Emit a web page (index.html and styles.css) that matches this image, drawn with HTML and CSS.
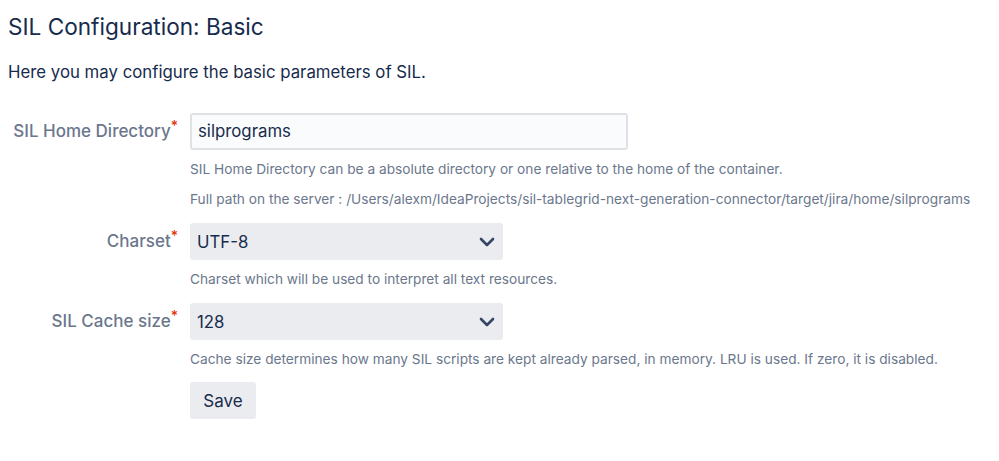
FILE: index.html
```html
<!DOCTYPE html>
<html>
<head>
<meta charset="utf-8">
<link rel="stylesheet" href="styles.css">
</head>
<body>
<div class="page">
  <h1 class="title">SIL Configuration: Basic</h1>
  <p class="intro">Here you may configure the basic parameters of SIL.</p>
  <form class="form">
    <div class="row">
      <label class="label">SIL Home Directory<span class="req">*</span></label>
      <div class="field">
        <div class="input">silprograms</div>
        <div class="desc first">SIL Home Directory can be a absolute directory or one relative to the home of the container.</div>
        <div class="desc">Full path on the server : /Users/alexm/IdeaProjects/sil-tablegrid-next-generation-connector/target/jira/home/silprograms</div>
      </div>
    </div>
    <div class="row">
      <label class="label">Charset<span class="req">*</span></label>
      <div class="field">
        <div class="select"><span>UTF-8</span>
          <svg class="chev" width="16" height="16" viewBox="0 0 16 16"><path d="M2 5 L8 11 L14 5" fill="none" stroke="#344563" stroke-width="2.6" stroke-linecap="round" stroke-linejoin="round"/></svg>
        </div>
        <div class="desc first">Charset which will be used to interpret all text resources.</div>
      </div>
    </div>
    <div class="row">
      <label class="label">SIL Cache size<span class="req">*</span></label>
      <div class="field">
        <div class="select"><span>128</span>
          <svg class="chev" width="16" height="16" viewBox="0 0 16 16"><path d="M2 5 L8 11 L14 5" fill="none" stroke="#344563" stroke-width="2.6" stroke-linecap="round" stroke-linejoin="round"/></svg>
        </div>
        <div class="desc first">Cache size determines how many SIL scripts are kept already parsed, in memory. LRU is used. If zero, it is disabled.</div>
      </div>
    </div>
    <div class="row btnrow">
      <div class="label"></div>
      <div class="field">
        <button type="button" class="btn">Save</button>
      </div>
    </div>
  </form>
</div>
</body>
</html>
```

FILE: styles.css
```css
html, body {
  margin: 0;
  padding: 0;
  background: #ffffff;
}
body {
  font-family: Inter, "Noto Sans", "Liberation Sans", sans-serif;
  color: #172b4d;
}
.page {
  padding: 11px 8px 0 8px;
}
.title {
  margin: 0;
  font-size: 22.6px;
  font-weight: 400;
  line-height: 32px;
  color: #172b4d;
}
.intro {
  margin: 17px 0 0 0;
  font-size: 16.8px;
  line-height: 24px;
  color: #172b4d;
}
.form {
  margin-top: 29px;
}
.row {
  display: grid;
  grid-template-columns: 170px 1fr;
  column-gap: 12px;
}
.label {
  text-align: right;
  font-size: 17px;
  font-weight: 500;
  line-height: 37px;
  height: 37px;
  color: #6b778c;
  white-space: nowrap;
}
.req {
  color: #de350b;
  font-size: 14px;
  position: relative;
  top: -6px;
  margin-left: 0;
}
.field {
  display: flex;
  flex-direction: column;
  align-items: flex-start;
}
.input {
  box-sizing: border-box;
  width: 438px;
  height: 37px;
  border: 2px solid #dfe1e6;
  border-radius: 3px;
  background: #fafbfc;
  padding: 0 6px;
  font-size: 16.8px;
  line-height: 33px;
  color: #172b4d;
}
.select {
  box-sizing: border-box;
  width: 313px;
  height: 37px;
  border-radius: 3px;
  background: #ebecf0;
  padding: 0 8px 0 7px;
  font-size: 16.8px;
  color: #172b4d;
  display: flex;
  align-items: center;
  justify-content: space-between;
}
.chev {
  display: block;
}
.desc {
  font-size: 13.7px;
  line-height: 20px;
  color: #6b778c;
  margin-top: 10px;
  white-space: nowrap;
}
.desc.first {
  margin-top: 9px;
}
.row + .row {
  margin-top: 14px;
}
.row.btnrow {
  margin-top: 13px;
}
.btn {
  box-sizing: border-box;
  height: 37px;
  padding: 0;
  border: none;
  border-radius: 3px;
  background: #ebecf0;
  font-family: inherit;
  font-size: 17px;
  color: #172b4d;
  width: 66px;
}
```
